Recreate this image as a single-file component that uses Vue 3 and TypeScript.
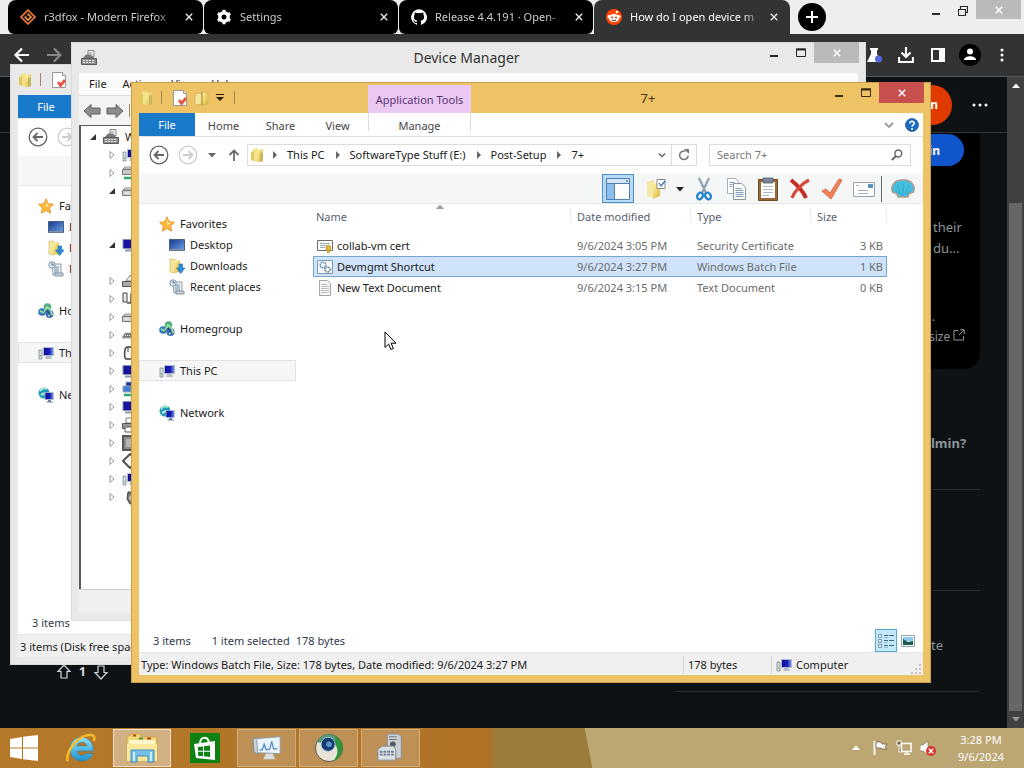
<script setup lang="ts">
import { ref } from 'vue'

interface Tab { title: string; icon: string; active: boolean }
interface Place { label: string; icon: string; child?: boolean; gap?: boolean; current?: boolean }
interface FileRow { name: string; date: string; type: string; size: string; icon: string }
interface Device { icon: string; open?: boolean; children?: number }

const tabs: Tab[] = [
  { title: 'r3dfox - Modern Firefox', icon: 'fox', active: false },
  { title: 'Settings', icon: 'gear', active: false },
  { title: 'Release 4.4.191 · Open-', icon: 'github', active: false },
  { title: 'How do I open device m', icon: 'reddit', active: true },
]

const places: Place[] = [
  { label: 'Favorites', icon: 'star' },
  { label: 'Desktop', icon: 'desktop', child: true },
  { label: 'Downloads', icon: 'downloads', child: true },
  { label: 'Recent places', icon: 'recent', child: true },
  { label: 'Homegroup', icon: 'homegroup', gap: true },
  { label: 'This PC', icon: 'pc', gap: true, current: true },
  { label: 'Network', icon: 'network', gap: true },
]

const files: FileRow[] = [
  { name: 'collab-vm cert', date: '9/6/2024 3:05 PM', type: 'Security Certificate', size: '3 KB', icon: 'cert' },
  { name: 'Devmgmt Shortcut', date: '9/6/2024 3:27 PM', type: 'Windows Batch File', size: '1 KB', icon: 'batch' },
  { name: 'New Text Document', date: '9/6/2024 3:15 PM', type: 'Text Document', size: '0 KB', icon: 'textdoc' },
]

const devices: Device[] = [
  { icon: 'pc' },
  { icon: 'drivenet' },
  { icon: 'drive', open: true, children: 2 },
  { icon: 'monitor', open: true, children: 1 },
  { icon: 'disc' },
  { icon: 'usb' },
  { icon: 'drive' },
  { icon: 'keyboard' },
  { icon: 'mouse' },
  { icon: 'monitor' },
  { icon: 'netcard' },
  { icon: 'monitor' },
  { icon: 'printer' },
  { icon: 'cpu' },
  { icon: 'software' },
  { icon: 'pc' },
  { icon: 'sound' },
]

const crumbs = ['This PC', 'SoftwareType Stuff (E:)', 'Post-Setup', '7+']
const ribbonTabs = ['Home', 'Share', 'View']
const tools = ['cut', 'copy', 'paste', 'delete', 'check', 'mail']
const selected = ref(1)
const query = ref('')
</script>

<template>
  <div class="desktop">
    <svg class="sprite" aria-hidden="true">
      <linearGradient id="g-yellow" x1="0" y1="0" x2="1" y2="1"><stop offset="0" stop-color="#fff3a8" /><stop offset="1" stop-color="#dcb63c" /></linearGradient>
      <linearGradient id="g-blue" x1="0" y1="0" x2="1" y2="1"><stop offset="0" stop-color="#17398c" /><stop offset="1" stop-color="#6ba2e6" /></linearGradient>
      <linearGradient id="g-screen" x1="0" y1="0" x2="1" y2="0"><stop offset="0" stop-color="#0a0a9c" /><stop offset="0.6" stop-color="#1b22b8" /><stop offset="1" stop-color="#8ba4ee" /></linearGradient>
      <linearGradient id="g-ie" x1="0" y1="0" x2="0" y2="1"><stop offset="0" stop-color="#8fe0f8" /><stop offset="1" stop-color="#1e93cf" /></linearGradient>
      <symbol id="folder" viewBox="0 0 16 16"><path d="M3 2l5-1v14l-5-1z" fill="#f3e38a" /><path d="M7 3l6-1v12l-6 1z" fill="url(#g-yellow)" /><path d="M10 6l3-1v9l-3 1z" fill="#c8b75c" /><path d="M1 5l3-1v10l-3-1z" fill="#e0cb62" /></symbol>
      <symbol id="newfolder" viewBox="0 0 16 16"><path d="M1 4l5-1 2 2v9l-7 1z" fill="#f6e69a" stroke="#c8a94a" stroke-width=".6" /><path d="M8 2l6 1v11l-6 1z" fill="url(#g-yellow)" stroke="#c8a94a" stroke-width=".6" /><path d="M8 2v13" stroke="#b49334" /></symbol>
      <symbol id="props" viewBox="0 0 16 16"><path d="M1.500.5h10l3 3v12h-13z" fill="#fff" stroke="#999" /><path d="M11.500.5v3h3" fill="#eee" stroke="#999" /><path d="M7 10l2.500 3.500L14 8" fill="none" stroke="#e2553f" stroke-width="2.800" /></symbol>
      <symbol id="star" viewBox="0 0 16 16"><path d="M8 .8l2.200 4.900 5.300.6-3.900 3.600 1.100 5.300L8 12.500l-4.700 2.700 1.100-5.300L.5 6.300l5.300-.6z" fill="#fcb73c" stroke="#dd8f20" stroke-width=".8" /><path d="M8 3l1.400 3.600 3 .5-4.400 2z" fill="#ffe59a" /></symbol>
      <symbol id="desktop" viewBox="0 0 16 16"><path d="M.5 2.500h15v11H.5z" fill="url(#g-blue)" stroke="#4a5f86" /><path d="M1 12h14v1.500H1z" fill="#88929e" /></symbol>
      <symbol id="downloads" viewBox="0 0 16 16"><path d="M1 1l5 .5v13.500l-5-1z" fill="#f6e69a" stroke="#cfae4a" stroke-width=".6" /><path d="M5 3l6-1v12l-6 1z" fill="url(#g-yellow)" /><path d="M10 6h3.500v4H16l-4.300 5.500L7.500 10H10z" fill="#2c8dd8" stroke="#1d66a8" stroke-width=".6" /></symbol>
      <symbol id="recent" viewBox="0 0 16 16"><path d="M4 3h9v11H5z" fill="#edf3f6" stroke="#8b9aa5" /><path d="M6 6h5M6 8h5M6 10h5M6 12h5" stroke="#6b8ba4" /><circle cx="4" cy="4" r="3.200" fill="#dcebf3" stroke="#7a96a8" /><path d="M4 2v2h2" stroke="#446" fill="none" stroke-width=".8" /><path d="M7 12h8v3H7z" fill="#c2cdd4" stroke="#8b9aa5" /></symbol>
      <symbol id="homegroup" viewBox="0 0 16 16"><circle cx="4" cy="9" r="3.800" fill="#317fc2" /><circle cx="9.500" cy="4" r="3.800" fill="#4fae82" /><circle cx="11.500" cy="11" r="4" fill="#3c69ba" /><path d="M2 8l4 2 3-6 3 2 2 5-4 2" fill="none" stroke="#9ce0a0" stroke-width="1.800" /><path d="M5 12l4-5 4 6" stroke="#1d3d74" fill="none" /></symbol>
      <symbol id="pc" viewBox="0 0 16 16"><path d="M1 5h3v9H1z" fill="#d7dde2" stroke="#7f8b94" stroke-width=".8" /><path d="M2 11h1" stroke="#35b535" /><path d="M5.500 2.500h10v8h-10z" fill="url(#g-screen)" stroke="#aeb9cc" /><path d="M8 11h5l1 3H7z" fill="#b6bfc9" /></symbol>
      <symbol id="network" viewBox="0 0 16 16"><circle cx="6" cy="6" r="5.500" fill="#2299b8" /><path d="M2 4c2-3 5-3 7-2M3 8l4-2" stroke="#a9eed2" stroke-width="2" fill="none" /><path d="M7 5.500h8.500v7H7z" fill="url(#g-screen)" stroke="#aeb9cc" stroke-width=".8" /><path d="M10 13h3v1.500h2v1H8.500v-1H10z" fill="#73809b" /></symbol>
      <symbol id="cert" viewBox="0 0 16 16"><path d="M.5 2.500h15v10H.5z" fill="#fff" stroke="#6d6d6d" /><path d="M3 5.500h10M3 7.500h7M3 9.500h5" stroke="#9aa" /><circle cx="11.500" cy="10" r="2.500" fill="#e0b53a" stroke="#9d7a1c" stroke-width=".6" /><path d="M10 12v3.500l1.500-1 1.500 1V12z" fill="#d4a52c" /></symbol>
      <symbol id="batch" viewBox="0 0 16 16"><path d="M.5 1.500h15v13H.5z" fill="#f4faff" stroke="#7d97ae" /><circle cx="6" cy="6" r="2.800" fill="none" stroke="#5d8bb0" stroke-dasharray="1.500 .6" stroke-width="1.500" /><circle cx="10.500" cy="10.500" r="2.600" fill="none" stroke="#6e8396" stroke-dasharray="1.500 .6" stroke-width="1.500" /></symbol>
      <symbol id="textdoc" viewBox="0 0 16 16"><path d="M2.500.5h8l3 3v12h-11z" fill="#fafafa" stroke="#a5a5a5" /><path d="M4 4.500h6M4 6.500h8M4 8.500h8M4 10.500h8M4 12.500h8" stroke="#bcbcbc" /></symbol>
      <symbol id="devmgr" viewBox="0 0 16 16"><path d="M7 .5h6v6H7z" fill="#eef2f2" stroke="#888" /><path d="M2 8l3-3.500h5L13 8z" fill="#777" /><path d="M8 3h3" stroke="#7a9a8a" /><path d="M.5 8.500h15v6H.5z" fill="#8f8f8f" stroke="#5b5b5b" /><path d="M2 10.500h12M2 12.500h12" stroke="#e3e3e3" stroke-dasharray="2 1" /></symbol>
      <symbol id="drive" viewBox="0 0 16 16"><path d="M3 5h13v2H1z" fill="#eee" stroke="#888" /><path d="M.5 7.500h16v5H.5z" fill="#d0d0d0" stroke="#777" /><path d="M3 10h4" stroke="#fff" /></symbol>
      <symbol id="drivenet" viewBox="0 0 16 16"><path d="M3 2h13v2H1z" fill="#eee" stroke="#888" /><path d="M.5 4.500h16v5H.5z" fill="#c8c8c8" stroke="#777" /><path d="M2 13h14" stroke="#2fa66a" stroke-width="2.500" /></symbol>
      <symbol id="monitor" viewBox="0 0 16 16"><path d="M1 2.500h14v9H1z" fill="#1515a0" stroke="#8791ab" /><path d="M3 13.500h10" stroke="#8d99ab" stroke-width="2" /></symbol>
      <symbol id="disc" viewBox="0 0 16 16"><path d="M4 8l4-6 4 6z" fill="#eee" stroke="#888" /><path d="M.5 8.500h15v5H.5z" fill="#aaa" stroke="#555" /></symbol>
      <symbol id="usb" viewBox="0 0 16 16"><path d="M1 2h4v9H1z" fill="#e8e8e8" stroke="#444" /><path d="M5 12h4V3h5v6H9" fill="#bbb" stroke="#555" stroke-width="1.500" /></symbol>
      <symbol id="keyboard" viewBox="0 0 16 16"><path d="M3 6h12v5H0z" fill="#777" stroke="#aaa" /><path d="M3 8.500h12" stroke="#eee" stroke-dasharray="1 1" /></symbol>
      <symbol id="mouse" viewBox="0 0 16 16"><path d="M5 2c-3 1-3 11-1 12h7c2-3 1-11-3-12z" fill="#f6f6f6" stroke="#444" stroke-width="1.500" /><path d="M6 2v5" stroke="#444" /></symbol>
      <symbol id="netcard" viewBox="0 0 16 16"><path d="M4 1h12v7H4z" fill="#1b2fae" stroke="#9aa" /><path d="M1 5h8v6H1z" fill="#3f7ddc" stroke="#9aa" /><path d="M2 14h14" stroke="#2fa66a" stroke-width="2.500" /></symbol>
      <symbol id="printer" viewBox="0 0 16 16"><path d="M4 1h9v5H4z" fill="#fff" stroke="#777" /><path d="M.5 6.500h15v5H.5z" fill="#999" stroke="#555" /><path d="M3 10h9v5H3z" fill="#fff" stroke="#555" /></symbol>
      <symbol id="cpu" viewBox="0 0 16 16"><path d="M1 1h14v14H1z" fill="#8c8c8c" stroke="#555" stroke-width="2" /><path d="M4 4h8v8H4z" fill="#b5b5b5" /></symbol>
      <symbol id="software" viewBox="0 0 16 16"><path d="M8 1l7 7-7 7-7-7z" fill="#f5f5f5" stroke="#555" stroke-width="2" /></symbol>
      <symbol id="sound" viewBox="0 0 16 16"><path d="M6 3h9v12H8l-3-5z" fill="#777" stroke="#444" /><circle cx="10" cy="9" r="3" fill="#bbb" /></symbol>
      <symbol id="open" viewBox="0 0 8 8"><path d="M7 1v6H1z" fill="#333" /></symbol>
      <symbol id="shut" viewBox="0 0 8 8"><path d="M2 .5l4 3.500-4 3.500z" fill="#fff" stroke="#999" /></symbol>
      <symbol id="fatleft" viewBox="0 0 18 16"><path d="M1 8l7-6.500v3.500h9v6H8v3.500z" fill="#8d8d8d" stroke="#606060" /></symbol>
      <symbol id="circleleft" viewBox="0 0 20 20"><circle cx="10" cy="10" r="8.800" fill="#fff" stroke="currentColor" stroke-width="1.300" /><path d="M15 10H6M9.500 6l-4 4 4 4" fill="none" stroke="currentColor" stroke-width="1.800" /></symbol>
      <symbol id="uparrow" viewBox="0 0 12 12"><path d="M6 12V1.500M1.500 6L6 1.500 10.500 6" fill="none" stroke="#6a6a6a" stroke-width="1.800" /></symbol>
      <symbol id="down" viewBox="0 0 8 8"><path d="M0 2h8L4 6.500z" fill="currentColor" /></symbol>
      <symbol id="qat" viewBox="0 0 8 8"><path d="M0 .5h8" stroke="#2b1c05" /><path d="M0 3h8L4 7z" fill="#2b1c05" /></symbol>
      <symbol id="right" viewBox="0 0 8 8"><path d="M2 0l4 4-4 4z" fill="#666" /></symbol>
      <symbol id="chevron" viewBox="0 0 10 8"><path d="M1 2l4 4 4-4" fill="none" stroke="currentColor" stroke-width="1.800" /></symbol>
      <symbol id="refresh" viewBox="0 0 12 12"><path d="M10.200 6.500A4.300 4.300 0 1 1 7.500 2.200" fill="none" stroke="#777" stroke-width="1.500" /><path d="M6 0h5v5z" fill="#777" /></symbol>
      <symbol id="lens" viewBox="0 0 12 12"><circle cx="7.300" cy="4.500" r="3.400" fill="none" stroke="#666" stroke-width="1.500" /><path d="M5 7L.8 11" stroke="#666" stroke-width="2" /></symbol>
      <symbol id="help" viewBox="0 0 16 16"><circle cx="8" cy="8" r="7.300" fill="#1a6cc4" stroke="#114c92" /><path d="M5.500 6.200c0-3.400 5.200-3.200 5 0C10.400 8 8 8 8 10" fill="none" stroke="#fff" stroke-width="1.800" /><path d="M7 11.500h2v2H7z" fill="#fff" /></symbol>
      <symbol id="pane" viewBox="0 0 24 22"><path d="M.5.500h23v21H.5z" fill="#fff" stroke="#4f80ad" /><path d="M1 1h22v4H1z" fill="#d3e6f6" /><path d="M1 6h7v15H1z" fill="#8fbfee" /><path d="M8.500 5v16M1 5.500h22" stroke="#4f80ad" /><path d="M20 3h2" stroke="#345" /></symbol>
      <symbol id="organize" viewBox="0 0 22 22"><path d="M2 4l7-2v18l-7-2z" fill="#f5e8a2" /><path d="M8 6l7-2v14l-7 3z" fill="url(#g-yellow)" /><path d="M12 1.500h8v9h-8z" fill="#fff" stroke="#888" /><path d="M14 5l2 3 4-5" stroke="#3a76ae" fill="none" stroke-width="1.300" /></symbol>
      <symbol id="cut" viewBox="0 0 22 24"><path d="M6 1l7 15M16 1L9 16" stroke="#8da2b4" stroke-width="2.200" /><ellipse cx="7" cy="19" rx="2.600" ry="3.500" fill="none" stroke="#2a86ce" stroke-width="2.400" transform="rotate(30 7 19)" /><ellipse cx="15" cy="19" rx="2.600" ry="3.500" fill="none" stroke="#2a86ce" stroke-width="2.400" transform="rotate(-30 15 19)" /></symbol>
      <symbol id="copy" viewBox="0 0 22 24"><path d="M2.500 1.500h8l3 3v12h-11z" fill="#fff" stroke="#a3b0bb" /><path d="M8.500 6.500h8l4 4v12h-12z" fill="#fff" stroke="#8896a3" /><path d="M10.500 11.500h6M10.500 13.500h8M10.500 15.500h8M10.500 17.500h8M10.500 19.500h8M4.500 5.500h5M4.500 7.500h3M4.500 9.500h3" stroke="#7b9cbd" /></symbol>
      <symbol id="paste" viewBox="0 0 22 24"><path d="M1.500 2.500h19v21h-19z" fill="#95683a" stroke="#6f4a24" /><path d="M4 5h14v16H4z" fill="#fff" /><path d="M6 9.500h10M6 12.500h10M6 15.500h10M6 18.500h6" stroke="#b1b9c2" /><path d="M6 1h10v5H6z" fill="#788797" stroke="#4f5a65" stroke-width=".8" /></symbol>
      <symbol id="delete" viewBox="0 0 22 24"><path d="M2 3c5 4 12 11 15 18" stroke="#c22d25" stroke-width="4" fill="none" /><path d="M20 3C12 7 5 15 3 21" stroke="#d8483b" stroke-width="3.200" fill="none" /></symbol>
      <symbol id="check" viewBox="0 0 22 24"><path d="M1 14l4-2 4 4L18 2l3 1L10 22z" fill="#f08259" stroke="#df6c48" /></symbol>
      <symbol id="mail" viewBox="0 0 22 24"><path d="M.5 5.500h21v14H.5z" fill="#fff" stroke="#93a2ae" /><path d="M3 8.500h3M5 13.500h10M5 16.500h10" stroke="#9db0bd" /><path d="M15 7h5v4h-5z" fill="#5a96b8" /></symbol>
      <symbol id="shell" viewBox="0 0 24 24"><path d="M12 3C4 2-1 9 1.500 15l4.500 2 1 3h10l1-3 4.500-2C25 9 20 2 12 3z" fill="#45bfe0" stroke="#b69a8c" stroke-width="1.500" /><path d="M12 19V6M10 18L6 8M14 18l4-10M8 17l-4-4M16 17l4-4" stroke="#2fa0c4" stroke-width=".8" /></symbol>
      <symbol id="details" viewBox="0 0 20 20"><path d="M2.500 3.500h3v3h-3zM2.500 8.500h3v3h-3zM2.500 13.500h3v3h-3z" fill="#fff" stroke="#6d97b0" /><path d="M8 4.500h4M13 4.500h5M8 9.500h4M13 9.500h5M8 14.500h4M13 14.500h5" stroke="#3e667e" /><path d="M8 6.500h4M8 11.500h4M8 16.500h4" stroke="#93b9cc" /></symbol>
      <symbol id="thumbs" viewBox="0 0 14 12"><path d="M.5.500h13v11H.5z" fill="#fff" stroke="#8ba0b2" /><path d="M2 2h10v4H2z" fill="#8ccaeb" /><path d="M2 4l5 3 5-1v4H2z" fill="#1b5952" /></symbol>
      <symbol id="min" viewBox="0 0 10 10"><path d="M1 8h8" stroke="currentColor" stroke-width="2" /></symbol>
      <symbol id="max" viewBox="0 0 10 10"><path d="M.5 1h9v7.500h-9z" fill="none" stroke="currentColor" /><path d="M0 1.500h10" stroke="currentColor" stroke-width="2" /></symbol>
      <symbol id="restore" viewBox="0 0 10 10"><path d="M.5 3.500h7v6h-7zM2.500 3V.5h7v6H8" fill="none" stroke="currentColor" stroke-width="1.200" /></symbol>
      <symbol id="close" viewBox="0 0 10 10"><path d="M1 1l8 8M9 1L1 9" stroke="currentColor" stroke-width="1.800" /></symbol>
      <symbol id="fox" viewBox="0 0 16 16"><path d="M8 1l7 7-7 7-7-7z" fill="#24140a" stroke="#e8793a" stroke-width="1.600" /><path d="M8 4l4 4-4 4-4-4 3-1z" fill="#f3a64c" /><path d="M8 6l2 2-2 2-2-2z" fill="#1b0d05" /></symbol>
      <symbol id="gear" viewBox="0 0 16 16"><circle cx="8" cy="8" r="4.200" fill="none" stroke="#fff" stroke-width="3.400" /><path d="M8 .8v3M8 12.200v3M1.800 4.400l2.500 1.500M11.700 10.100l2.500 1.500M1.800 11.600l2.500-1.500M11.700 5.900l2.500-1.500" stroke="#fff" stroke-width="3" /></symbol>
      <symbol id="github" viewBox="0 0 16 16"><path d="M8 .3a7.900 7.900 0 0 0-2.500 15.400c.4.100.5-.2.500-.4v-1.400c-2.200.5-2.700-1-2.700-1-.4-.9-.9-1.200-.9-1.200-.7-.5.100-.5.100-.5.800.1 1.200.8 1.200.8.700 1.200 1.900.9 2.300.7.100-.5.300-.9.500-1.100-1.800-.2-3.600-.9-3.600-3.900 0-.9.300-1.600.8-2.100-.1-.2-.4-1 .1-2.100 0 0 .7-.2 2.200.8a7.600 7.600 0 0 1 4 0c1.500-1 2.200-.8 2.200-.8.400 1.100.2 1.900.1 2.100.5.600.8 1.300.8 2.100 0 3.100-1.900 3.700-3.700 3.900.3.300.6.800.6 1.500v2.200c0 .2.100.5.600.4A7.900 7.900 0 0 0 8 .3z" fill="#fff" /></symbol>
      <symbol id="reddit" viewBox="0 0 16 16"><circle cx="8" cy="8" r="8" fill="#ff4500" /><ellipse cx="8" cy="9" rx="5.300" ry="4" fill="#fff" /><circle cx="3" cy="7.500" r="1.600" fill="#fff" /><circle cx="13" cy="7.500" r="1.600" fill="#fff" /><circle cx="11" cy="3" r="1.300" fill="#fff" /><circle cx="6" cy="8.500" r="1.100" fill="#f04a1a" /><circle cx="10" cy="8.500" r="1.100" fill="#f04a1a" /><path d="M6 11q2 1.300 4 0" stroke="#333" fill="none" /></symbol>
      <symbol id="plus" viewBox="0 0 14 14"><path d="M7 1v12M1 7h12" stroke="#fff" stroke-width="2" /></symbol>
      <symbol id="navleft" viewBox="0 0 16 16"><path d="M15 8H2M8 1.500L1.500 8 8 14.500" fill="none" stroke="currentColor" stroke-width="2.200" /></symbol>
      <symbol id="flask" viewBox="0 0 16 16"><path d="M4 1h8v2h-1v4l4 8H1l4-8V3H4z" fill="#fff" /><circle cx="12.500" cy="12" r="3.500" fill="#5566d8" /></symbol>
      <symbol id="save" viewBox="0 0 16 16"><path d="M8 0v9M3.500 5.500L8 10l4.500-4.500M1 10v5h14v-5" fill="none" stroke="#fff" stroke-width="2.200" /></symbol>
      <symbol id="sidepane" viewBox="0 0 14 14"><path d="M1 1h12v12H1z" fill="none" stroke="#fff" stroke-width="2" /><path d="M8 1h5v12H8z" fill="#fff" /></symbol>
      <symbol id="person" viewBox="0 0 22 22"><circle cx="11" cy="11" r="11" fill="#000" /><circle cx="11" cy="7.500" r="3" fill="#fff" /><path d="M5 16c0-5 12-5 12 0z" fill="#fff" /></symbol>
      <symbol id="dots" viewBox="0 0 16 4"><circle cx="2" cy="2" r="1.500" fill="#fff" /><circle cx="8" cy="2" r="1.500" fill="#fff" /><circle cx="14" cy="2" r="1.500" fill="#fff" /></symbol>
      <symbol id="vdots" viewBox="0 0 4 16"><circle cx="2" cy="3" r="1.500" fill="#fff" /><circle cx="2" cy="8" r="1.500" fill="#fff" /><circle cx="2" cy="13" r="1.500" fill="#fff" /></symbol>
      <symbol id="external" viewBox="0 0 12 12"><path d="M5 1.500H1v9.500h9.500V7M7 .8h4.200V5M11 1L6 6" fill="none" stroke="#8d999e" /></symbol>
      <symbol id="vote" viewBox="0 0 14 16"><path d="M7 1l6 6.500h-3V14H4V7.500H1z" fill="none" stroke="#cfd5d8" stroke-width="1.200" /></symbol>
      <symbol id="start" viewBox="0 0 28 26"><path d="M0 4l12-2v10.500H0zM13 1.800L28 0v12.500H13zM0 13.500h12V24L0 22zM13 13.500h15V26l-15-1.800z" fill="#fff" /></symbol>
      <symbol id="ie" viewBox="0 0 32 32"><path d="M28.500 19H12c1 5 7 5.500 9 2.500h7C24 33 5 31 5 17 5 1 29 1 28.500 19zM12 14h10c-1-5-9-5-10 0z" fill="url(#g-ie)" stroke="#247ca9" stroke-width=".5" /><path d="M3 29C-1 23 12 2 26 3c4 .5 4 4 2.500 6" fill="none" stroke="#f8bc28" stroke-width="2.500" /></symbol>
      <symbol id="explorer" viewBox="0 0 32 30"><path d="M1 4l5-3h8l2 3h15v24H1z" fill="#f2d775" stroke="#caa545" /><path d="M3 7h26v9H3z" fill="#fff6c9" /><path d="M7 2.500h3M21 5.500h4" stroke="#c23c2d" stroke-width="2" /><path d="M13 5.500h4" stroke="#3f9a4f" stroke-width="2" /><path d="M1 11h30v17H1z" fill="#fbe89b" /><path d="M5 29V17h23v12h-6v-6H11v6z" fill="#78bfe6" stroke="#3d90c0" /><path d="M8 19v9M25 19v9" stroke="#c9edfc" stroke-width="2" /></symbol>
      <symbol id="store" viewBox="0 0 30 30"><path d="M0 0h30v30H0z" fill="#0d8212" /><path d="M10 11c0-8 8-8 9-1" fill="none" stroke="#fff" stroke-width="2" /><path d="M4 11l21-3v19L6 25z" fill="#fff" /><path d="M8 14l5-.6v4.400H8zM14 13.300l6-.7v5.200h-6zM8 18.800h5v4.400l-5-.5zM14 18.800h6v5.200l-6-.7z" fill="#0d8212" /></symbol>
      <symbol id="perfmon" viewBox="0 0 32 30"><path d="M1 5l5-1v18l-4-3z" fill="#c9d1d9" stroke="#7b8790" /><path d="M5 5l25-2v18L6 20z" fill="#eaf5fd" stroke="#8fa0af" /><path d="M8 17h3l2-6 2 6 4-1 2-8 2 8h4" fill="none" stroke="#4a86cc" stroke-width="1.300" /><path d="M15 21h7l3 6H12z" fill="#d8dde1" /></symbol>
      <symbol id="orb" viewBox="0 0 32 32"><circle cx="16" cy="16" r="14.500" fill="#e8e5d6" stroke="#4f5044" /><path d="M17 1.500c17 1 18 24 4 28 6-8 5-15-1-20z" fill="#33923d" /><path d="M3 10C8-1 20 0 24 5l-4 5z" fill="#597" /><circle cx="15" cy="12" r="7.500" fill="#173c72" stroke="#a8c5df" /><circle cx="16" cy="12" r="3" fill="#5795cf" /></symbol>
      <symbol id="machine" viewBox="0 0 30 32"><path d="M11 1h12l3 3v23H11z" fill="#c9ced2" stroke="#838b92" /><path d="M13 4h8M13 7h8" stroke="#697178" /><circle cx="17" cy="12" r="3" fill="#4f5960" /><path d="M1 17l5-3h12l2 4v11H1z" fill="#dce1e6" stroke="#7f8992" /><path d="M3 20h15M3 23h15" stroke="#6a7f94" stroke-width="2" stroke-dasharray="3 1" /></symbol>
      <symbol id="flag" viewBox="0 0 16 16"><path d="M2.500 1v14" stroke="#fff" stroke-width="1.800" /><path d="M4 2h5l1 2h5l-2 3 2 2h-5L9 8H4z" fill="#fff" stroke="#5c4e32" stroke-width=".7" /></symbol>
      <symbol id="wired" viewBox="0 0 16 16"><path d="M5.500 3.500h9.500v8H5.500zM8 14h6M10.500 12v2" fill="none" stroke="#fff" stroke-width="1.500" /><path d="M1 1h4v4H1zM3 5v7h2" fill="#6d6147" stroke="#fff" /></symbol>
      <symbol id="muted" viewBox="0 0 16 16"><path d="M0 5h3l5-4v14l-5-4H0z" fill="#fff" stroke="#7a6a48" stroke-width=".6" /><circle cx="11" cy="11" r="5" fill="#d9352e" /><path d="M8.800 8.800l4.400 4.400M13.200 8.800l-4.400 4.400" stroke="#fff" stroke-width="1.500" /></symbol>
      <symbol id="up" viewBox="0 0 8 8"><path d="M0 6h8L4 1.500z" fill="currentColor" /></symbol>
      <symbol id="pointer" viewBox="0 0 13 20"><path d="M1 1v15.500l3.600-3.400 2.300 5.400 2.500-1-2.300-5.300H12z" fill="#fff" stroke="#000" /></symbol>
      <symbol id="grip" viewBox="0 0 10 10"><path d="M8 0h2v2H8zM8 4h2v2H8zM8 8h2v2H8zM4 4h2v2H4zM4 8h2v2H4zM0 8h2v2H0z" fill="#c9c4c4" /></symbol>
    </svg>

    <div class="browser">
      <header class="tabstrip">
        <div v-for="tab in tabs" :key="tab.title" class="tab" :class="{ active: tab.active }">
          <svg class="i16"><use :href="'#' + tab.icon" /></svg>
          <span class="tab-title">{{ tab.title }}</span>
          <button aria-label="Close tab"><svg class="i8"><use href="#close" /></svg></button>
        </div>
        <button class="newtab" aria-label="New tab"><svg class="i14"><use href="#plus" /></svg></button>
        <div class="controls muted-controls">
          <button aria-label="Minimize"><svg class="i10"><use href="#min" /></svg></button>
          <button aria-label="Restore"><svg class="i10"><use href="#restore" /></svg></button>
          <button class="x" aria-label="Close"><svg class="i8"><use href="#close" /></svg></button>
        </div>
      </header>
      <nav class="navbar">
        <button aria-label="Back"><svg class="i16"><use href="#navleft" /></svg></button>
        <button class="dim" aria-label="Forward"><svg class="i16 flip"><use href="#navleft" /></svg></button>
        <span class="grow"></span>
        <button aria-label="Labs"><svg class="i16"><use href="#flask" /></svg></button>
        <button aria-label="Downloads"><svg class="i16"><use href="#save" /></svg></button>
        <button aria-label="Sidebar"><svg class="i14"><use href="#sidepane" /></svg></button>
        <button aria-label="Profile"><svg class="i22"><use href="#person" /></svg></button>
        <button aria-label="Menu"><svg class="i16"><use href="#vdots" /></svg></button>
      </nav>
      <div class="viewport">
        <div class="page">
          <div class="site-header">
            <button class="login">Log In</button>
            <button class="more" aria-label="More"><svg class="i16"><use href="#dots" /></svg></button>
          </div>
          <div class="site-body">
            <div class="votes"><svg class="i16"><use href="#vote" /></svg><span>1</span><svg class="i16 over"><use href="#vote" /></svg></div>
            <aside class="community">
              <div class="card">
                <button class="join">Join</button>
                <p class="blurb">their<br />du...</p>
                <p class="rules">&nbsp;.<br />size <svg class="i12"><use href="#external" /></svg></p>
              </div>
              <p class="related strong">lmin?</p>
              <p class="related"></p>
              <p class="related low">te</p>
            </aside>
          </div>
        </div>
        <div class="scrollbar">
          <svg class="i8"><use href="#up" /></svg>
          <div class="thumb"></div>
          <svg class="i8 faint"><use href="#down" /></svg>
        </div>
      </div>
    </div>

    <section class="window back">
      <div class="titlebar">
        <div class="quick">
          <svg class="i16"><use href="#folder" /></svg><i class="bar"></i>
          <svg class="i16 after"><use href="#props" /></svg>
        </div>
      </div>
      <div class="ribbon"><button class="file">File</button></div>
      <div class="address-row">
        <button aria-label="Back"><svg class="i20"><use href="#circleleft" /></svg></button>
        <button class="off" aria-label="Forward"><svg class="i20 flip"><use href="#circleleft" /></svg></button>
      </div>
      <div class="toolbar"></div>
      <div class="body">
        <nav class="places">
          <a v-for="p in places" :key="p.label" href="#" :class="{ child: p.child, gap: p.gap, current: p.current }">
            <svg class="i16"><use :href="'#' + p.icon" /></svg>{{ p.label }}
          </a>
        </nav>
      </div>
      <div class="details"><span>3 items</span></div>
      <footer class="status"><span class="grow">3 items (Disk free space)</span></footer>
    </section>

    <section class="window devices">
      <div class="titlebar">
        <svg class="i16 app"><use href="#devmgr" /></svg>
        <h2>Device Manager</h2>
        <div class="controls muted-controls">
          <button aria-label="Minimize"><svg class="i10"><use href="#min" /></svg></button>
          <button aria-label="Maximize"><svg class="i10"><use href="#max" /></svg></button>
          <button class="x" aria-label="Close"><svg class="i8"><use href="#close" /></svg></button>
        </div>
      </div>
      <div class="menubar"><button>File</button><button>Action</button><button>View</button><button>Help</button></div>
      <div class="dm-tools">
        <svg class="i18"><use href="#fatleft" /></svg><svg class="i18 flip"><use href="#fatleft" /></svg><i class="bar"></i>
      </div>
      <ul class="tree">
        <li class="root"><svg class="i8"><use href="#open" /></svg><svg class="i16"><use href="#devmgr" /></svg>WIN</li>
        <template v-for="(d, n) in devices" :key="n">
          <li><svg class="i8"><use :href="d.open ? '#open' : '#shut'" /></svg><svg class="i16"><use :href="'#' + d.icon" /></svg></li>
          <li v-for="c in d.children ?? 0" :key="c"></li>
        </template>
      </ul>
      <div class="dm-status"></div>
    </section>

    <section class="window front">
      <div class="titlebar">
        <div class="quick">
          <svg class="i16"><use href="#folder" /></svg><i class="bar"></i>
          <svg class="i16 after"><use href="#props" /></svg>
          <svg class="i16"><use href="#newfolder" /></svg>
          <svg class="i8"><use href="#qat" /></svg><i class="bar end"></i>
        </div>
        <div class="context">Application Tools</div>
        <h2>7+</h2>
        <div class="controls">
          <button aria-label="Minimize"><svg class="i10"><use href="#min" /></svg></button>
          <button aria-label="Maximize"><svg class="i10"><use href="#max" /></svg></button>
          <button class="x" aria-label="Close"><svg class="i8"><use href="#close" /></svg></button>
        </div>
      </div>
      <div class="ribbon">
        <button class="file">File</button>
        <button v-for="t in ribbonTabs" :key="t" class="rtab">{{ t }}</button>
        <button class="manage">Manage</button>
        <span class="grow"></span>
        <button class="collapse" aria-label="Expand ribbon"><svg class="i10"><use href="#chevron" /></svg></button>
        <button aria-label="Help"><svg class="i14"><use href="#help" /></svg></button>
      </div>
      <div class="address-row">
        <button aria-label="Back"><svg class="i20"><use href="#circleleft" /></svg></button>
        <button class="off" aria-label="Forward"><svg class="i20 flip"><use href="#circleleft" /></svg></button>
        <button class="recent" aria-label="Recent locations"><svg class="i8"><use href="#down" /></svg></button>
        <button class="upward" aria-label="Up"><svg class="i12"><use href="#uparrow" /></svg></button>
        <div class="address">
          <svg class="i16"><use href="#folder" /></svg>
          <template v-for="c in crumbs" :key="c">
            <svg class="i8 sep"><use href="#right" /></svg><button>{{ c }}</button>
          </template>
          <span class="grow"></span>
          <button class="drop" aria-label="Previous locations"><svg class="i8"><use href="#chevron" /></svg></button>
          <button class="reload" aria-label="Refresh"><svg class="i12"><use href="#refresh" /></svg></button>
        </div>
        <label class="search">
          <input v-model="query" type="text" placeholder="Search 7+" aria-label="Search 7+" />
          <svg class="i12"><use href="#lens" /></svg>
        </label>
      </div>
      <div class="toolbar">
        <button class="tool pressed" aria-label="Navigation pane"><svg class="i24"><use href="#pane" /></svg></button>
        <button class="tool split" aria-label="Organize"><svg class="i22"><use href="#organize" /></svg></button>
        <button class="tiny" aria-label="Organize menu"><svg class="i8"><use href="#down" /></svg></button>
        <button v-for="t in tools" :key="t" class="tool" :aria-label="t"><svg class="i24"><use :href="'#' + t" /></svg></button>
        <i class="rule"></i>
        <button class="tool" aria-label="Classic Explorer settings"><svg class="i24"><use href="#shell" /></svg></button>
      </div>
      <div class="body">
        <nav class="places">
          <a v-for="p in places" :key="p.label" href="#" :class="{ child: p.child, gap: p.gap, current: p.current }">
            <svg class="i16"><use :href="'#' + p.icon" /></svg>{{ p.label }}
          </a>
        </nav>
        <div class="listing">
          <table>
            <colgroup><col /><col class="c-date" /><col class="c-type" /><col class="c-size" /></colgroup>
            <thead>
              <tr>
                <th><div class="sorted">Name<svg class="i8"><use href="#up" /></svg></div></th>
                <th><div>Date modified</div></th>
                <th><div>Type</div></th>
                <th><div class="last">Size</div></th>
              </tr>
            </thead>
            <tbody>
              <tr v-for="(f, n) in files" :key="f.name" :class="{ selected: n === selected }" @click="selected = n">
                <td class="name"><svg class="i16"><use :href="'#' + f.icon" /></svg>{{ f.name }}</td>
                <td>{{ f.date }}</td>
                <td>{{ f.type }}</td>
                <td class="size">{{ f.size }}</td>
              </tr>
            </tbody>
          </table>
        </div>
      </div>
      <div class="details">
        <span>3 items</span><span class="second">1 item selected</span><span>178 bytes</span>
        <span class="grow"></span>
        <button class="view on" aria-label="Details view"><svg class="i20"><use href="#details" /></svg></button>
        <button class="view" aria-label="Thumbnail view"><svg class="i14"><use href="#thumbs" /></svg></button>
      </div>
      <footer class="status">
        <span class="grow">Type: Windows Batch File, Size: 178 bytes, Date modified: 9/6/2024 3:27 PM</span>
        <span class="cell bytes">178 bytes</span>
        <span class="cell zone"><svg class="i16"><use href="#pc" /></svg>Computer<svg class="i10 grip"><use href="#grip" /></svg></span>
      </footer>
    </section>

    <svg class="pointer"><use href="#pointer" /></svg>

    <footer class="taskbar">
      <button class="plain" aria-label="Start"><svg class="i28"><use href="#start" /></svg></button>
      <button class="plain wide" aria-label="Internet Explorer"><svg class="i32"><use href="#ie" /></svg></button>
      <button class="task lit" aria-label="File Explorer"><svg class="i32"><use href="#explorer" /></svg></button>
      <button class="task none" aria-label="Store"><svg class="i30"><use href="#store" /></svg></button>
      <button class="task" aria-label="Task Manager"><svg class="i30"><use href="#perfmon" /></svg></button>
      <button class="task" aria-label="r3dfox"><svg class="i30"><use href="#orb" /></svg></button>
      <button class="task" aria-label="Device Manager"><svg class="i30"><use href="#machine" /></svg></button>
      <div class="tray">
        <svg class="i8"><use href="#up" /></svg>
        <svg class="i16"><use href="#flag" /></svg>
        <svg class="i16"><use href="#wired" /></svg>
        <svg class="i16"><use href="#muted" /></svg>
        <time>3:28 PM<br />9/6/2024</time>
      </div>
    </footer>
  </div>
</template>

<style>
body { margin: 0; overflow: hidden; }
</style>

<style scoped>
* { box-sizing: border-box; }
.desktop { position: relative; display: flex; flex-direction: column; height: 100vh; font: 11px/16px "Noto Sans", "Open Sans", sans-serif; color: #1a1a1a; white-space: nowrap; overflow: hidden; }
.sprite { position: absolute; width: 0; height: 0; }
svg { flex: none; display: block; }
button { font: inherit; color: inherit; background: none; border: 0; padding: 0; display: flex; align-items: center; justify-content: center; }
h2, p, ul { margin: 0; padding: 0; font-weight: 400; }
.grow { flex: 1; min-width: 0; overflow: hidden; }
.flip { transform: scaleX(-1); }
.over { transform: scaleY(-1); }
.i8 { width: 8px; height: 8px; }
.i10 { width: 10px; height: 10px; }
.i12 { width: 12px; height: 12px; }
.i14 { width: 14px; height: 14px; }
.i16 { width: 16px; height: 16px; }
.i18 { width: 18px; height: 16px; }
.i20 { width: 20px; height: 20px; }
.i22 { width: 22px; height: 22px; }
.i24 { width: 24px; height: 24px; }
.i28 { width: 28px; height: 26px; }
.i30 { width: 30px; height: 30px; }
.i32 { width: 32px; height: 32px; }

.browser { flex: 1; min-height: 0; display: flex; flex-direction: column; background: #333; }
.tabstrip { display: flex; height: 34px; padding-left: 8px; background: #eee; align-items: center; }
.tab { flex: 0 1 195px; min-width: 0; height: 34px; margin-right: 1px; padding: 0 10px 0 12px; display: flex; align-items: center; gap: 8px; background: #000; color: #ccc; border-radius: 8px 8px 6px 6px; }
.tab + .tab { flex-basis: 194px; }
.tab + .tab.active { flex-basis: 196px; padding-right: 12px; background: #333; color: #fff; border-radius: 8px 8px 0 0; margin-right: 8px; }
.tab-title { flex: 1; overflow: hidden; mask-image: linear-gradient(to right, #000 112px, transparent 132px); }
.tab button { color: #e4e4e4; }
.newtab { width: 28px; height: 28px; border-radius: 50%; background: #000; }
.controls { display: flex; align-self: flex-start; margin-left: auto; color: #2b2b2b; }
.controls button { width: 27px; height: 21px; }
.controls .x { width: 45px; color: #fff; background: #c8504f; }
.muted-controls .x { background: #bababa; }
.tabstrip .controls { margin-right: 3px; }
.tabstrip .controls .x { height: 19px; }
.navbar { display: flex; align-items: center; height: 42px; padding: 0 12px 0 14px; color: #fff; }
.navbar button { width: 32px; height: 32px; }
.navbar button:first-child, .navbar .dim { width: 16px; margin-right: 16px; }
.navbar .dim { color: #888; }
.navbar button:last-child { margin-right: -6px; }
.viewport { flex: 1; min-height: 0; display: flex; border-top: 1px solid #55585a; }
.page { flex: 1; display: flex; flex-direction: column; background: #0e1215; color: #8b9599; font-size: 13px; line-height: 21px; }
.site-header { display: flex; justify-content: flex-end; align-items: center; gap: 20px; height: 56px; padding-right: 19px; border-bottom: 1px solid #30373a; }
.login { height: 40px; padding: 0 14px; border-radius: 20px; background: #e03a00; color: #fff; font-weight: 700; font-size: 12px; }
.site-body { flex: 1; display: flex; justify-content: space-between; }
.votes { align-self: flex-end; display: flex; align-items: center; gap: 7px; margin: 0 0 46px 56px; color: #ddd; font-size: 12px; font-weight: 700; }
.community { width: 305px; margin-right: 27px; }
.card { height: 236px; padding: 1px 16px 0 254px; background: #000; border-radius: 0 0 16px 16px; }
.join { height: 32px; margin-left: auto; padding: 0 24px; border-radius: 16px; background: #1155cc; color: #fff; font-weight: 700; font-size: 12px; float: right; }
.blurb { clear: both; padding: 51px 0 0 4px; }
.rules { padding-top: 48px; font-size: 12px; line-height: 20px; }
.rules .i12 { display: inline-block; }
.related { height: 101px; padding: 44px 0 0 256px; border-bottom: 1px solid #252b2f; }
.related.strong { height: 121px; padding-top: 64px; font-weight: 700; }
.scrollbar { width: 17px; display: flex; flex-direction: column; align-items: center; padding: 5px 0; background: #404040; color: #fff; }
.scrollbar .thumb { width: 13px; flex: 1; margin: 113px 0 4px; background: #666; }
.faint { color: #999; }

.window { position: absolute; display: flex; flex-direction: column; padding: 0 8px 8px; background: #e9e9e9; box-shadow: inset 0 0 0 1px #dadada; }
.back { left: 10px; top: 64px; right: 214px; bottom: 103px; }
.devices { left: 71px; top: 42px; right: 158px; bottom: 147px; }
.front { left: 131px; top: 82px; right: 93px; bottom: 85px; background: #edc366; box-shadow: inset 0 0 0 1px #c79e4b; }
.titlebar { display: flex; align-items: center; height: 31px; flex: none; }
.titlebar h2 { flex: 1; text-align: center; font-size: 14px; line-height: 20px; color: #333; }
.front h2 { color: #4b3410; font-size: 13px; }
.titlebar .controls { margin-right: -1px; }
.front .controls { color: #3b270b; }
.front .controls .x { color: #fff; }
.titlebar .app { margin-left: 2px; }
.devices h2 { padding-left: 76px; }
.quick { display: flex; align-items: center; gap: 6px; width: 229px; }
.bar { width: 1px; height: 13px; background: #a08a57; }
.quick .after { margin-left: 4px; }
.quick .end { margin-left: 4px; }
.context { width: 103px; height: 28px; align-self: flex-end; line-height: 30px; text-align: center; background: #e9c8f1; color: #5d3475; }
.ribbon { flex: none; display: flex; height: 24px; background: #fff; border-bottom: 1px solid #e2e2e2; color: #444; }
.file { width: 56px; height: 23px; background: #1979ca; color: #fff; }
.rtab { width: 57px; padding-top: 2px; }
.manage { width: 103px; height: 18px; margin-left: 2px; padding-top: 8px; border: solid #ddd; border-width: 0 1px; }
.collapse { width: 24px; margin-right: 4px; color: #999; }
.ribbon button:last-child:not(.file) { margin-right: 4px; }
.address-row { flex: none; display: flex; align-items: center; height: 37px; padding: 0 12px 1px 10px; background: #fff; color: #666; }
.address-row .off { margin-left: 9px; color: #ccc; }
.recent { width: 12px; margin-left: 8px; }
.upward { width: 12px; margin-left: 10px; color: #666; }
.address { flex: 1; display: flex; align-items: center; height: 22px; margin: 0 12px 0 7px; padding-left: 2px; border: 1px solid #dcdcdc; color: #1a1a1a; }
.address .sep { margin: 0 8px 0 9px; }
.address .i16 + .sep { margin-left: 5px; }
.drop { width: 18px; color: #666; }
.reload { width: 25px; height: 20px; border-left: 1px solid #dcdcdc; }
.search { display: flex; align-items: center; width: 202px; height: 22px; padding: 0 7px; border: 1px solid #dcdcdc; }
.search input { flex: 1; min-width: 0; padding: 0; border: 0; outline: 0; font: inherit; background: none; }
.search input::placeholder { color: #777; opacity: 1; }
.toolbar { flex: none; display: flex; justify-content: flex-end; align-items: center; height: 30px; padding-right: 4px; background: #f5f6f6; border-bottom: 1px solid #e6e6e6; color: #222; }
.tool { width: 32px; height: 29px; }
.pressed { border: 1px solid #4c92c9; background: #b9daf3; }
.split { margin-left: 6px; }
.tiny { width: 12px; margin: 0 2px; }
.rule { width: 1px; height: 26px; margin: 0 5px 0 1px; background: #666; }
.body { flex: 1; min-height: 0; display: flex; background: #fff; }
.places { width: 174px; padding-top: 9px; }
.places a { display: flex; align-items: center; gap: 5px; width: 157px; height: 21px; padding-left: 20px; color: inherit; text-decoration: none; }
.places .child { padding-left: 30px; }
.places .gap { margin-top: 21px; }
.places .current { background: #f6f6f6; box-shadow: inset 0 0 0 1px #e2e2e2; }
.listing { flex: 1; padding-right: 36px; }
table { width: 100%; table-layout: fixed; border-collapse: collapse; }
.c-date, .c-type { width: 120px; }
.c-size { width: 77px; }
th { height: 31px; padding: 0; font-weight: 400; text-align: left; vertical-align: top; color: #5a6170; }
th div { height: 14px; margin-top: 4px; padding-left: 6px; line-height: 18px; border-left: 1px solid #ececec; }
th .sorted { position: relative; padding-left: 3px; border: 0; }
.sorted svg { position: absolute; left: 50%; top: -5px; margin-left: -6px; color: #999; }
th .last { border-right: 1px solid #ececec; }
td { height: 21px; padding: 0 0 0 7px; color: #6b6b6b; }
td.name { display: flex; align-items: center; gap: 4px; padding-left: 4px; color: #1a1a1a; }
td.size { padding: 0 4px 0 0; text-align: right; }
.selected { background: #cfe4fa; outline: 1px solid #76a5d2; outline-offset: -1px; }
.details { flex: none; display: flex; align-items: center; height: 23px; padding: 0 4px 0 14px; background: #fff; color: #333a4d; }
.second { margin: 0 6px 0 21px; }
.view { width: 22px; height: 23px; }
.on { border: 1px solid #5aa9cc; background: #c3e9f8; }
.status { flex: none; display: flex; align-items: center; height: 23px; padding: 2px 0 0 2px; background: #f0f0f0; border-top: 1px solid #e3e3e3; }
.cell { display: flex; align-items: center; height: 18px; padding-left: 4px; border-left: 1px solid #d7d7d7; }
.bytes { width: 88px; }
.zone { width: 152px; gap: 4px; }
.zone .grip { margin: 8px 2px 0 auto; }

.menubar { flex: none; display: flex; align-items: center; gap: 16px; height: 22px; padding-left: 10px; background: #fbfbfb; }
.dm-tools { flex: none; display: flex; align-items: center; gap: 5px; height: 30px; padding: 0 4px; background: #f4f4f4; border-top: 1px solid #ddd; }
.tree { flex: 1; min-height: 0; list-style: none; padding-top: 2px; background: #fff; border: solid #5c5c5c; border-width: 1px 0 0 2px; overflow: hidden; }
.tree li { display: flex; align-items: center; gap: 6px; height: 18px; padding-left: 27px; }
.tree .root { padding-left: 8px; }
.dm-status { flex: none; height: 24px; background: #f0f0f0; border-top: 1px solid #ccc; }

.pointer { position: absolute; left: 384px; top: 331px; width: 13px; height: 20px; }

.taskbar { flex: none; display: flex; align-items: center; height: 40px; background: linear-gradient(79deg, transparent 581px, #bca774 582px), linear-gradient(90deg, #b5792a, #b17228 490px, #9c7d3b 494px, #9f7a3c); }
.plain { width: 48px; height: 40px; }
.wide { width: 65px; }
.task { width: 59px; height: 38px; margin-right: 3px; border: 1px solid #d3ad78; background: #bf9055; }
.lit { width: 58px; margin-right: 4px; border-color: #f4e3ca; background: #d1b084; }
.none { border-color: transparent; background: none; }
.tray { display: flex; align-items: center; gap: 8px; margin-left: auto; padding-right: 16px; color: #fff; }
.tray .i8 { margin-right: 4px; }
.tray time { width: 54px; margin-left: 10px; text-align: center; line-height: 17px; }
</style>
